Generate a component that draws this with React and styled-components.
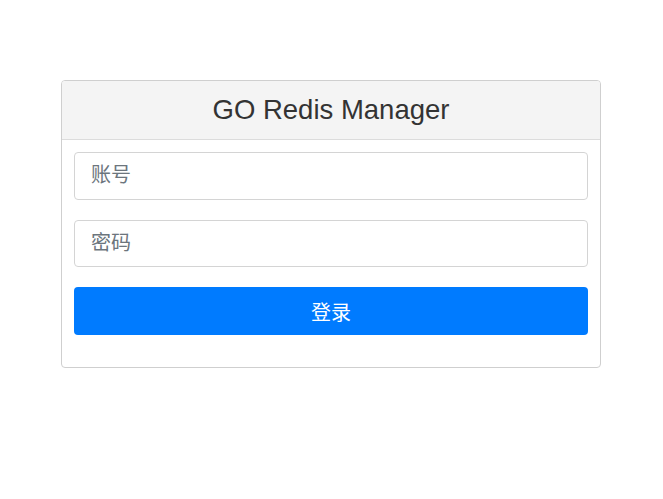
import React from "react";
import styled, { createGlobalStyle } from "styled-components";

const GlobalStyle = createGlobalStyle`
  body {
    margin: 0;
    background: #fff;
    font-family: "Liberation Sans", Arial, "Noto Sans CJK SC", sans-serif;
  }
`;

const Page = styled.div`
  display: flex;
  justify-content: center;
  padding: 80px 1px 0 0;
`;

const Card = styled.div`
  width: 540px;
  box-sizing: border-box;
  border: 1px solid #cfcfcf;
  border-radius: 4px;
  background: #fff;
  overflow: hidden;
`;

const Header = styled.div`
  height: 58px;
  display: flex;
  align-items: center;
  justify-content: center;
  background: #f4f4f4;
  border-bottom: 1px solid #dcdcdc;
  color: #333;
  font-size: 27.5px;
`;

const Body = styled.form`
  display: flex;
  flex-direction: column;
  gap: 20px;
  padding: 12px 12px 32px;
`;

const Input = styled.input`
  height: 47.6px;
  box-sizing: border-box;
  border: 1px solid #d4d4d4;
  border-radius: 4px;
  padding: 0 16px;
  font-size: 20px;
  font-family: "Liberation Sans", Arial, "Noto Sans CJK SC", sans-serif;
  color: #495057;
  outline: none;
  &::placeholder {
    color: #6c757d;
  }
`;

const Button = styled.button`
  height: 48px;
  border: none;
  border-radius: 4px;
  background: #007bff;
  color: #fff;
  font-size: 20px;
  font-family: "Liberation Sans", Arial, "Noto Sans CJK SC", sans-serif;
  cursor: pointer;
`;

export default function App() {
  return (
    <>
      <GlobalStyle />
      <Page>
        <Card>
          <Header>GO Redis Manager</Header>
          <Body onSubmit={(e) => e.preventDefault()}>
            <Input type="text" placeholder="账号" />
            <Input type="password" placeholder="密码" />
            <Button type="submit">登录</Button>
          </Body>
        </Card>
      </Page>
    </>
  );
}
